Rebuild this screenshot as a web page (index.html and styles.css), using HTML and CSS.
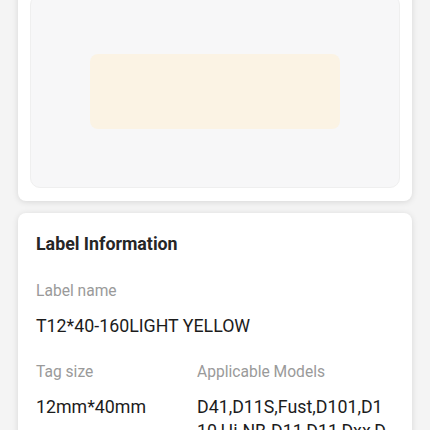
FILE: index.html
```html
<!DOCTYPE html>
<html lang="en">

<head>
  <title>Label Information</title>
  <meta charset="utf-8">
  <link rel="stylesheet" href="styles.css">
</head>

<body>
  <div class="page">
    <div class="card preview-card">
      <div class="preview">
        <div class="tape"></div>
      </div>
    </div>
    <div class="card info-card">
      <h2>Label Information</h2>
      <div class="field">
        <div class="key">Label name</div>
        <div class="value">T12*40-160LIGHT YELLOW</div>
      </div>
      <div class="row">
        <div class="field size">
          <div class="key">Tag size</div>
          <div class="value">12mm*40mm</div>
        </div>
        <div class="field models">
          <div class="key">Applicable Models</div>
          <div class="value">D41,D11S,Fust,D101,D110,Hi-NB-D11,D11,Dxx,D11_H,D110_M,D101_H</div>
        </div>
      </div>
    </div>
  </div>
</body>

</html>
```

FILE: styles.css
```css
* {
  box-sizing: border-box;
}

body {
  margin: 0;
  background-color: #f4f4f4;
  font-family: Roboto, "Noto Sans", sans-serif;
  overflow: hidden;
}

.page {
  display: flex;
  flex-direction: column;
  gap: 12px;
  padding: 0 18px;
}

.card {
  background-color: #fff;
  border-radius: 8px;
  box-shadow: 0 1px 6px rgba(0, 0, 0, .12);
}

/* top card, scrolled partly out of view */
.preview-card {
  margin-top: -17px;
  padding: 12px 12px 13px 12px;
}

.preview {
  height: 193px;
  display: flex;
  align-items: center;
  justify-content: center;
  background-color: #f7f7f8;
  border: 1px solid #efefef;
  border-radius: 10px;
}

.tape {
  width: 250px;
  height: 75px;
  border-radius: 8px;
  background-color: #fbf3e4;
}

.info-card {
  padding: 19px 18px 20px 18px;
}

h2 {
  margin: 0;
  font-size: 17.8px;
  line-height: 24px;
  font-weight: 700;
  color: #262626;
}

.field {
  margin-top: 25px;
}

.row {
  display: flex;
}

.row .field {
  margin-top: 24px;
}

.size {
  width: 161px;
  flex-shrink: 0;
}

/* wraps the model list just after "D1" */
.models {
  flex: 1;
  padding-right: 8px;
}

.key {
  font-size: 15.6px;
  line-height: 20px;
  color: #9a9a9a;
}

.value {
  margin-top: 13px;
  font-size: 17.8px;
  line-height: 24px;
  color: #1c1c1c;
  word-break: break-all;
}
```
